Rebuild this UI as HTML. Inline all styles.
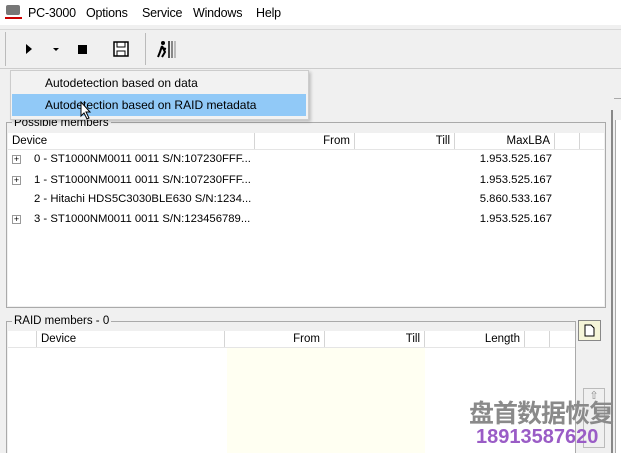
<!DOCTYPE html><html style="overflow:hidden;height:453px"><head><style>
body{margin:0;width:621px;height:453px;background:#f0f0f0;font-family:"Liberation Sans",Arial,sans-serif;font-size:11.5px;color:#000;position:relative;overflow:hidden}
.a{position:absolute}
.hd{position:absolute;height:16px;border-right:1px solid #d5d5d5;line-height:16px;box-sizing:border-box;padding:0 4px}
.r{text-align:right}
.row{position:absolute;left:8px;width:572px;height:18px;line-height:18px;font-size:11.3px}
.pl{position:absolute;left:4px;top:5px;width:7px;height:7px;border:1px solid #999;background:#fff;font-size:9px;line-height:7px;text-align:center}
.m{position:absolute;top:6px;font-size:12.5px;letter-spacing:-0.2px}
</style></head><body>
<div class="a" style="left:0;top:0;width:621px;height:25px;background:#fff"></div>
<div class="a" style="left:6px;top:5px;width:14px;height:10px;background:#777;border-radius:2px"></div>
<div class="a" style="left:5px;top:17px;width:17px;height:2px;background:#c00"></div>
<div class="m" style="left:28px">PC-3000</div>
<div class="m" style="left:86px">Options</div>
<div class="m" style="left:142px">Service</div>
<div class="m" style="left:193px">Windows</div>
<div class="m" style="left:256px">Help</div>
<div class="a" style="left:0;top:29px;width:621px;height:1px;background:#d8d8d8"></div>
<div class="a" style="left:5px;top:32px;width:1px;height:34px;background:#bbb"></div>
<div class="a" style="left:26px;top:44px;width:0;height:0;border-left:6px solid #000;border-top:5px solid transparent;border-bottom:5px solid transparent"></div>
<div class="a" style="left:53px;top:48px;width:0;height:0;border-top:3px solid #000;border-left:3px solid transparent;border-right:3px solid transparent"></div>
<div class="a" style="left:78px;top:45px;width:9px;height:9px;background:#000"></div>
<svg class="a" style="left:113px;top:41px" width="16" height="16"><rect x="1" y="1" width="14" height="14" fill="#fff" stroke="#000" stroke-width="1.5"/><rect x="4" y="1" width="8" height="5" fill="none" stroke="#000"/><rect x="4" y="10" width="8" height="5" fill="none" stroke="#000"/></svg>
<div class="a" style="left:145px;top:33px;width:1px;height:32px;background:#bbb"></div>
<svg class="a" style="left:157px;top:40px" width="20" height="19"><circle cx="6" cy="3" r="2"/><path d="M5 6 L3 12 L1 17 M5 6 L8 12 L5 17 M5 8 L9 9" stroke="#000" stroke-width="2" fill="none"/><rect x="11" y="1" width="2" height="17" fill="#444"/><rect x="14" y="1" width="2" height="17" fill="#888"/><rect x="17" y="1" width="2" height="17" fill="#bbb"/></svg>
<div class="a" style="left:0;top:68px;width:621px;height:1px;background:#ccc"></div>
<div class="a" style="left:614px;top:98px;width:7px;height:1px;background:#aaa"></div>
<div class="a" style="left:611px;top:110px;width:2px;height:343px;background:#888"></div>
<div class="a" style="left:615px;top:120px;width:6px;height:333px;border-left:1px solid #aaa;background:#fff"></div>

<div class="a" style="left:6px;top:122px;width:598px;height:184px;border:1px solid #aaa"></div>
<div class="a" style="left:8px;top:133px;width:596px;height:173px;background:#fff"></div>
<div class="a" style="left:12px;top:117px;background:#f0f0f0;padding:0 2px">Possible members</div>
<div class="hd" style="left:8px;top:133px;width:247px">Device</div>
<div class="hd r" style="left:255px;top:133px;width:100px">From</div>
<div class="hd r" style="left:355px;top:133px;width:100px">Till</div>
<div class="hd r" style="left:455px;top:133px;width:100px">MaxLBA</div>
<div class="hd" style="left:555px;top:133px;width:25px"></div>
<div class="a" style="left:8px;top:149px;width:596px;height:1px;background:#e5e5e5"></div>
<div class="row" style="top:150px"><span class="pl">+</span><span class="a" style="left:26px">0 - ST1000NM0011 0011 S/N:107230FFF...</span><span class="a" style="right:28px">1.953.525.167</span></div>
<div class="row" style="top:171px"><span class="pl">+</span><span class="a" style="left:26px">1 - ST1000NM0011 0011 S/N:107230FFF...</span><span class="a" style="right:28px">1.953.525.167</span></div>
<div class="row" style="top:190px"><span class="a" style="left:26px">2 - Hitachi HDS5C3030BLE630 S/N:1234...</span><span class="a" style="right:28px">5.860.533.167</span></div>
<div class="row" style="top:210px"><span class="pl">+</span><span class="a" style="left:26px">3 - ST1000NM0011 0011 S/N:123456789...</span><span class="a" style="right:28px">1.953.525.167</span></div>

<div class="a" style="left:6px;top:321px;width:568px;height:140px;border:1px solid #aaa;border-bottom:none"></div>
<div class="a" style="left:8px;top:331px;width:567px;height:122px;background:#fff"></div>
<div class="a" style="left:227px;top:347px;width:198px;height:106px;background:#fffff2"></div>
<div class="a" style="left:12px;top:315px;background:#f0f0f0;padding:0 2px">RAID members - 0</div>
<div class="hd" style="left:8px;top:331px;width:29px"></div>
<div class="hd" style="left:37px;top:331px;width:188px">Device</div>
<div class="hd r" style="left:225px;top:331px;width:100px">From</div>
<div class="hd r" style="left:325px;top:331px;width:100px">Till</div>
<div class="hd r" style="left:425px;top:331px;width:100px">Length</div>
<div class="hd" style="left:525px;top:331px;width:25px"></div>
<div class="a" style="left:8px;top:347px;width:567px;height:1px;background:#e5e5e5"></div>
<div class="a" style="left:578px;top:320px;width:23px;height:21px;background:#f5f5d8;border:1px solid #888;box-sizing:border-box"></div>
<svg class="a" style="left:584px;top:324px" width="11" height="13"><path d="M1 1H7L10 4V12H1Z" fill="#fff" stroke="#000"/></svg>
<div class="a" style="left:583px;top:388px;width:22px;height:60px;border:1px solid #bbb;box-sizing:border-box;color:#888;text-align:center;font-size:11px">⇧</div>

<div class="a" style="left:10px;top:70px;width:297px;height:48px;background:#f2f2f2;border:1px solid #ccc;box-shadow:2px 2px 3px rgba(0,0,0,.2)"></div>
<div class="a" style="left:12px;top:94px;width:294px;height:22px;background:#91c9f7"></div>
<div class="a" style="left:45px;top:76px;font-size:12px">Autodetection based on data</div>
<div class="a" style="left:45px;top:98px;font-size:12px">Autodetection based on RAID metadata</div>
<svg class="a" style="left:80px;top:101px" width="12" height="19"><path d="M1 1V15L4 12L7 18L9 17L6 11H10Z" fill="#fff" stroke="#000"/></svg>

<div class="a" style="left:469px;top:394px;font-family:'Noto Sans CJK SC',sans-serif;font-size:25px;font-weight:bold;color:#8a8a8a;letter-spacing:-1px">盘首数据恢复</div>
<div class="a" style="left:476px;top:426px;font-size:20px;font-weight:bold;color:#9a5cc6">18913587620</div>
</body></html>
